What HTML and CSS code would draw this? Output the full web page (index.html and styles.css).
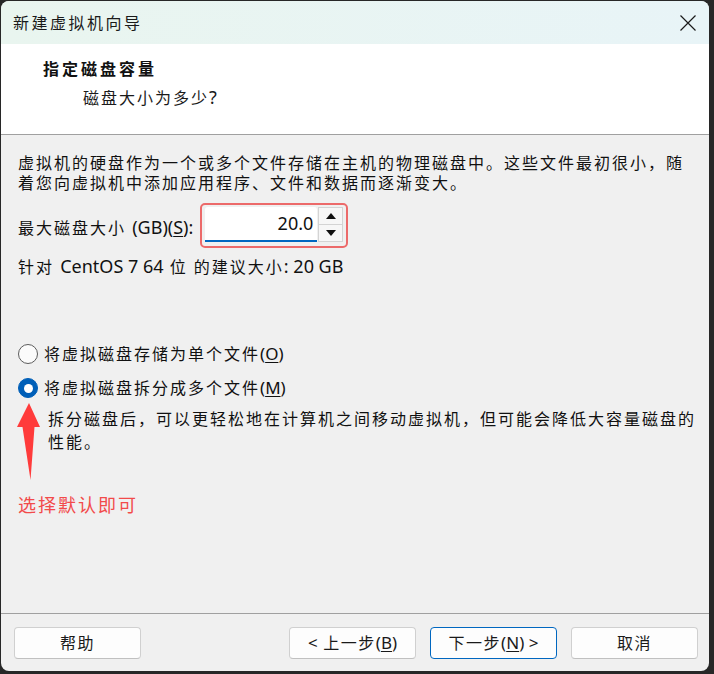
FILE: index.html
```html
<!DOCTYPE html>
<html lang="zh-CN">
<head>
<meta charset="utf-8">
<title>新建虚拟机向导</title>
<link rel="stylesheet" href="styles.css">
</head>
<body>
<div class="window">
  <div class="titlebar">
    <span class="title">新建虚拟机向导</span>
    <svg class="close" width="16" height="16" viewBox="0 0 16 16"><path d="M0.5 0.5 L15.5 15.5 M15.5 0.5 L0.5 15.5" stroke="#1a1a1a" stroke-width="1.2" fill="none"/></svg>
  </div>
  <div class="header">
    <div class="h-title">指定磁盘容量</div>
    <div class="h-sub">磁盘大小为多少<span class="lat">?</span></div>
  </div>
  <div class="content">
    <p class="intro">虚拟机的硬盘作为一个或多个文件存储在主机的物理磁盘中。这些文件最初很小，随着您向虚拟机中添加应用程序、文件和数据而逐渐变大。</p>
    <div class="size-row">
      <span class="label">最大磁盘大小 <span class="lat">(GB)(<u>S</u>):</span></span>
      <div class="spin-frame">
        <div class="spin-input"><span class="lat">20.0</span></div>
        <div class="spin-btns">
          <div class="spin-btn"><svg width="10" height="6" viewBox="0 0 10 6"><path d="M0 6 L5 0 L10 6 Z" fill="#111"/></svg></div>
          <div class="spin-btn"><svg width="10" height="6" viewBox="0 0 10 6"><path d="M0 0 L10 0 L5 6 Z" fill="#111"/></svg></div>
        </div>
      </div>
    </div>
    <p class="recommend">针对 <span class="lat">CentOS 7 64</span> 位 的建议大小<span class="lat">: 20 GB</span></p>
    <div class="radio-row first">
      <span class="radio"></span>
      <span>将虚拟磁盘存储为单个文件<span class="lat sm">(<u>O</u>)</span></span>
    </div>
    <div class="radio-row second">
      <span class="radio checked"></span>
      <span>将虚拟磁盘拆分成多个文件<span class="lat sm">(<u>M</u>)</span></span>
    </div>
    <p class="desc">拆分磁盘后，可以更轻松地在计算机之间移动虚拟机，但可能会降低大容量磁盘的性能。</p>
    <p class="note">选择默认即可</p>
    <svg class="arrow" width="26" height="78" viewBox="0 0 26 78"><path d="M13 0 L24 24 L18.5 24 L14.5 77 L6.5 24 L1 24 Z" fill="#ff3b3b"/></svg>
  </div>
  <div class="footer">
    <button class="btn">帮助</button>
    <div class="nav">
      <button class="btn"><span class="lat">&lt;</span> 上一步<span class="lat">(<u>B</u>)</span></button>
      <button class="btn default">下一步<span class="lat">(<u>N</u>) &gt;</span></button>
      <button class="btn">取消</button>
    </div>
  </div>
</div>
</body>
</html>
```

FILE: styles.css
```css
html, body {
  margin: 0;
  padding: 0;
}
body {
  background: #272727;
  width: 714px;
  height: 674px;
  padding: 1px 0 0 1px;
  box-sizing: border-box;
  font-family: "Noto Sans", "Noto Sans CJK SC", sans-serif;
  font-size: 16px;
  letter-spacing: 2px;
  color: #111;
}
.window {
  width: 708px;
  height: 670px;
  border-radius: 8px;
  overflow: hidden;
  background: #f0f0f0;
  display: flex;
  flex-direction: column;
}
.lat {
  font-family: "Noto Sans", sans-serif;
  font-size: 18px;
  letter-spacing: 0;
}
.lat.sm {
  font-size: 17px;
}
u {
  text-decoration-thickness: 1px;
  text-underline-offset: 2px;
}
.titlebar {
  height: 43px;
  flex: none;
  display: flex;
  align-items: center;
  justify-content: space-between;
  padding: 0 13px 0 12px;
  background: linear-gradient(90deg, #e9f5ef, #e8f4f7);
}
.title {
  font-size: 16px;
  letter-spacing: 2.5px;
  color: #1a1a1a;
  line-height: 20px;
}
.close {
  display: block;
}
.header {
  height: 90px;
  flex: none;
  background: #ffffff;
  border-bottom: 1px solid #a0a0a0;
  box-sizing: content-box;
  padding: 0;
}
.h-title {
  padding: 15px 0 0 42px;
  line-height: 20px;
  font-weight: 700;
  letter-spacing: 3px;
}
.h-sub {
  padding: 8px 0 0 82px;
  line-height: 20px;
  color: #1a1a1a;
}
.content {
  flex: 1;
  position: relative;
  padding: 18px 0 0 17px;
}
.content p {
  margin: 0;
}
.intro {
  width: 672px;
  line-height: 20px;
}
.size-row {
  margin-top: 10px;
  display: flex;
  align-items: center;
  height: 45px;
}
.label {
  line-height: 20px;
  margin-top: 3px;
}
.spin-frame {
  margin-left: 7px;
  border: 2px solid #ec6a6a;
  border-radius: 5px;
  padding: 2px 3px 4px 3px;
  display: flex;
  height: 35px;
  box-sizing: content-box;
}
.spin-input {
  width: 112px;
  height: 35px;
  box-sizing: border-box;
  background: #fff;
  border-bottom: 2px solid #0067c0;
  border-radius: 3px 3px 0 0;
  display: flex;
  align-items: center;
  justify-content: flex-end;
  padding: 0 4px 1px 0;
}
.spin-btns {
  margin-left: 1px;
  width: 25px;
  display: flex;
  flex-direction: column;
}
.spin-btn {
  height: 18px;
  box-sizing: border-box;
  border: 1px solid #d4d4d4;
  background: #f7f7f7;
  display: flex;
  align-items: center;
  justify-content: center;
}
.spin-btn + .spin-btn {
  border-top: none;
}
.recommend {
  margin-top: 8px !important;
  line-height: 20px;
}
.radio-row {
  display: flex;
  align-items: center;
  height: 20px;
  line-height: 20px;
}
.radio-row.first {
  margin-top: 67px;
}
.radio-row.second {
  margin-top: 14px;
}
.radio {
  width: 20px;
  height: 20px;
  box-sizing: border-box;
  border: 1px solid #5c5c5c;
  border-radius: 50%;
  background: #fbfbfb;
  margin: 0 6px 0 0;
  flex: none;
  display: flex;
  align-items: center;
  justify-content: center;
}
.radio.checked {
  background: #005fb8;
  border-color: #005fb8;
}
.radio.checked::after {
  content: "";
  width: 9px;
  height: 9px;
  border-radius: 50%;
  background: #fff;
}
.desc {
  margin: 10px 0 0 30px !important;
  width: 656px;
  line-height: 23px;
}
.note {
  margin-top: 39px !important;
  line-height: 24px;
  font-size: 18px;
  color: #f24a4a;
}
.arrow {
  position: absolute;
  left: 15px;
  top: 268px;
}
.footer {
  flex: none;
  height: 57px;
  border-top: 1px solid #a0a0a0;
  box-sizing: content-box;
  display: flex;
  align-items: flex-start;
  justify-content: space-between;
  padding: 0 11px 0 13px;
}
.nav {
  display: flex;
  gap: 14px;
}
.btn {
  margin-top: 13px;
  width: 127px;
  height: 32px;
  background: #fdfdfd;
  border: 1px solid #d0d0d0;
  border-bottom-color: #c0c0c0;
  border-radius: 4px;
  font-family: "Noto Sans", "Noto Sans CJK SC", sans-serif;
  font-size: 16px;
  letter-spacing: 1.5px;
  color: #1a1a1a;
  padding: 0;
  line-height: 20px;
}
.btn .lat {
  font-size: 17px;
}
.btn.default {
  border-color: #0067c0;
}
```
